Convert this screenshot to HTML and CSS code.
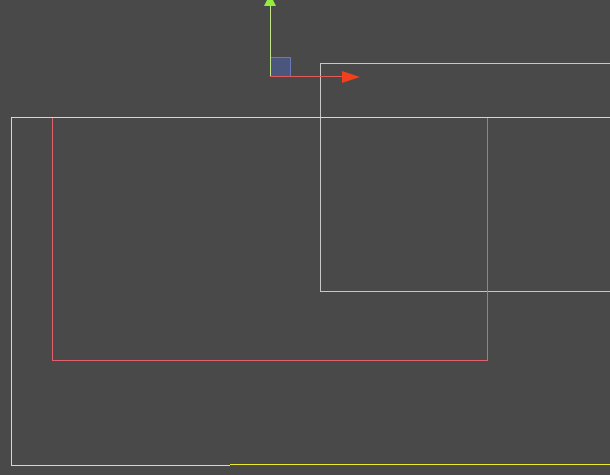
FILE: index.html
```html
<!DOCTYPE html>
<html>
<head>
<meta charset="utf-8">
<link rel="stylesheet" href="styles.css">
</head>
<body>
<div class="scene">
  <div class="box box-white"></div>
  <div class="box box-red"></div>
  <div class="box box-yellow"></div>
  <div class="box box-yellow-tail"></div>
  <div class="gizmo">
    <div class="plane"></div>
    <div class="axis-y"></div>
    <div class="axis-x"></div>
    <svg class="head-y" width="14" height="8" viewBox="0 0 14 8" xmlns="http://www.w3.org/2000/svg"><path d="M1 7 L5 -1 Q7 -3 9 -1 L13 7 Z"/></svg>
    <svg class="head-x" width="20" height="14" viewBox="0 0 20 14" xmlns="http://www.w3.org/2000/svg"><polygon points="1,1 19,7 1,13"/></svg>
  </div>
</div>
</body>
</html>
```
FILE: styles.css
```css
html, body {
  margin: 0;
  padding: 0;
  background: #494949;
  overflow: hidden;
}
.scene {
  position: relative;
  width: 610px;
  height: 475px;
  background: #494949;
  overflow: hidden;
}
.box {
  position: absolute;
  box-sizing: border-box;
}
.box-white {
  left: 320px;
  top: 63px;
  width: 320px;
  height: 229px;
  border: 1px solid #c8c8c8;
}
.box-yellow {
  left: 11px;
  top: 117px;
  width: 219px;
  height: 349px;
  border-left: 1px solid #eeea2c;
  border-top: 1px solid #eeea2c;
  border-bottom: 1px solid #eeea2c;
}
.box-yellow::after {
  content: "";
  position: absolute;
  left: 218px;
  top: -1px;
  width: 400px;
  height: 1px;
  background: #eeea2c;
}
.box-yellow-tail {
  left: 230px;
  top: 464px;
  width: 400px;
  height: 1px;
  background: #eeea2c;
}
.box-red {
  left: 52px;
  top: 117px;
  width: 436px;
  height: 244px;
  border: 1px solid #e0606c;
}
.gizmo {
  position: absolute;
  left: 0;
  top: 0;
  width: 610px;
  height: 100px;
}
.plane {
  position: absolute;
  left: 270px;
  top: 57px;
  width: 21px;
  height: 20px;
  box-sizing: border-box;
  background: #4b567c;
  border: 1px solid #6a78bc;
}
.axis-y {
  position: absolute;
  left: 270px;
  top: 5px;
  width: 1px;
  height: 72px;
  background: #c4e48a;
}
.axis-x {
  position: absolute;
  left: 270px;
  top: 76px;
  width: 76px;
  height: 1px;
  background: #e05a5a;
}
.head-y {
  position: absolute;
  left: 263px;
  top: -1px;
  fill: #94ec40;
}
.head-x {
  position: absolute;
  left: 341px;
  top: 70px;
  fill: #f0401c;
}
```
